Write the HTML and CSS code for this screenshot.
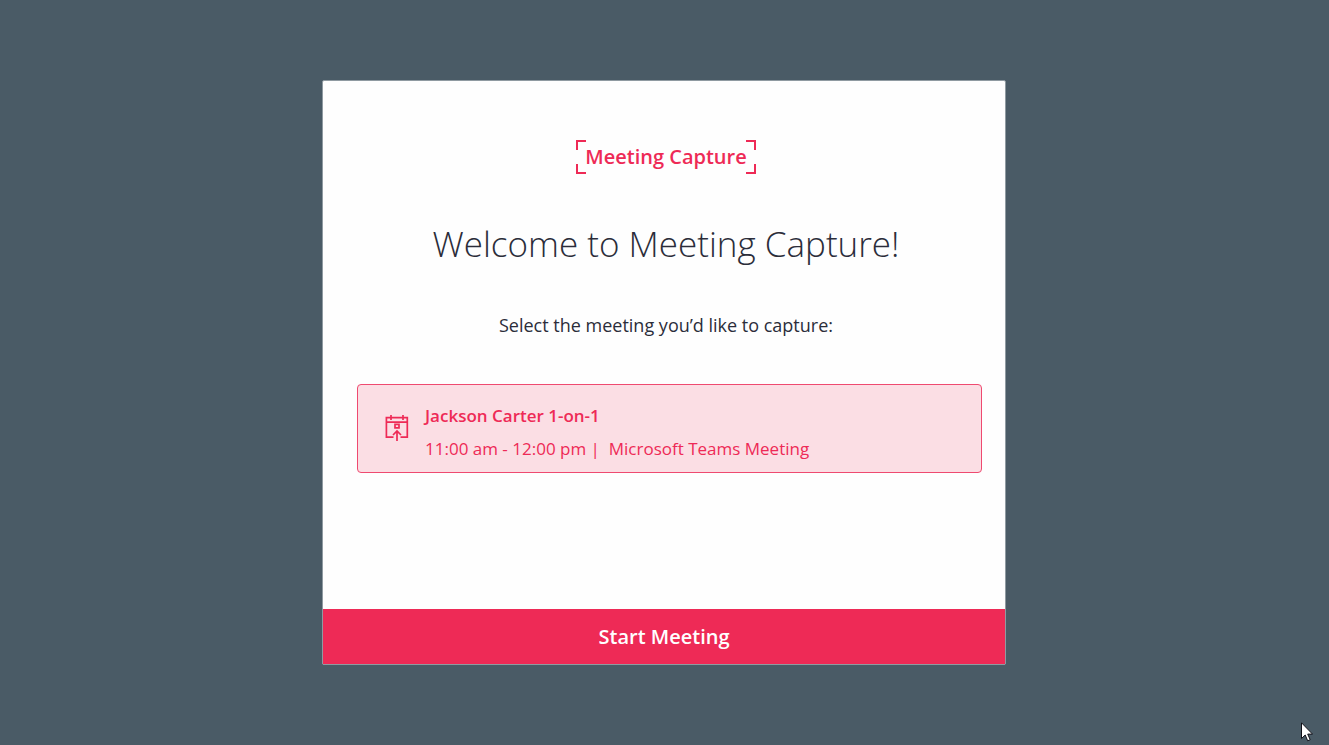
FILE: index.html
```html
<!DOCTYPE html>
<html lang="en">
<head>
<meta charset="utf-8">
<meta name="viewport" content="width=device-width, initial-scale=1">
<title>Meeting Capture</title>
<link rel="stylesheet" href="styles.css">
</head>
<body class="page">
<main class="dialog">
  <div class="content">
    <header class="intro">
      <div class="brand">Meeting Capture</div>
      <h1 class="title">Welcome to Meeting Capture!</h1>
      <p class="prompt">Select the meeting you’d like to capture:</p>
    </header>
    <button class="meeting" type="button" aria-pressed="true">
      <svg class="meeting-icon" viewBox="0 0 24 28" width="24" height="28" fill="none" stroke="currentColor" aria-hidden="true">
        <path stroke-width="1.7" d="M8.5 23.2H1.4V3.7H22.3V23.2H15.5M1.4 8.2H22.3M6 1V6M18 1V6"/>
        <path stroke-width="1.7" d="M10 10.3h4v3.6h-4zM12 27V17M8 21l4-4 4 4"/>
      </svg>
      <span class="meeting-text">
        <span class="meeting-name">Jackson Carter 1-on-1</span>
        <span class="meeting-info">11:00 am - 12:00 pm |&nbsp; Microsoft Teams Meeting</span>
      </span>
    </button>
  </div>
  <button class="start" type="button">Start Meeting</button>
</main>
<svg class="pointer" viewBox="0 0 12 20" width="12" height="20" aria-hidden="true">
  <path d="M.5.8V16.5L4.2 13 6.7 18.8 9.2 17.7 6.7 12.1H11.5z" fill="#fff" stroke="#101018"/>
</svg>
</body>
</html>
```

FILE: styles.css
```css
* {
  box-sizing: border-box;
}

.page {
  display: flex;
  align-items: center;
  justify-content: center;
  min-height: 100vh;
  margin: 0;
  padding-right: 1px;
  background: #4a5b66;
  color: #2b2d3a;
  font-family: "Open Sans", "Noto Sans", sans-serif;
}

.dialog {
  display: flex;
  flex-direction: column;
  width: 100%;
  max-width: 684px;
  border: 1px solid #8f9aa1;
  border-radius: 2px;
  background: #fefefe;
}

.content {
  padding: 59px 23px 136px 34px;
}

.intro {
  display: flex;
  flex-direction: column;
  align-items: center;
  padding-right: 7px;
}

.brand {
  padding: 3px 9px;
  color: #ee2a56;
  font-size: 20px;
  font-weight: 600;
  line-height: 28px;
  --tick: linear-gradient(#ee2a56, #ee2a56);
  background:
    var(--tick) 0 0 / 10px 2px, var(--tick) 0 0 / 2px 10px,
    var(--tick) 100% 0 / 10px 2px, var(--tick) 100% 0 / 2px 10px,
    var(--tick) 0 100% / 10px 2px, var(--tick) 0 100% / 2px 10px,
    var(--tick) 100% 100% / 10px 2px, var(--tick) 100% 100% / 2px 10px;
  background-repeat: no-repeat;
}

.title {
  margin: 45px 0 0;
  font-size: 35px;
  font-weight: 300;
  line-height: 50px;
}

.prompt {
  margin: 44px 0 0;
  font-size: 18px;
  line-height: 24px;
}

.meeting {
  display: flex;
  align-items: flex-start;
  gap: 16px;
  width: 100%;
  margin-top: 47px;
  padding: 19px 27px 11px;
  border: 1px solid #ef4a70;
  border-radius: 4px;
  background: #fbdee4;
  color: #ee2a56;
  font: inherit;
  text-align: left;
}

.meeting-icon {
  flex: none;
  margin-top: 10px;
}

.meeting-text {
  display: flex;
  flex-direction: column;
  gap: 9px;
  font-size: 17px;
  line-height: 24px;
}

.meeting-name {
  font-weight: 600;
}

.start {
  padding: 14px;
  border: 0;
  background: #ee2a56;
  color: #fff;
  font: 600 20px/27px "Open Sans", "Noto Sans", sans-serif;
}

.pointer {
  position: fixed;
  right: 16px;
  bottom: 3px;
}
```
